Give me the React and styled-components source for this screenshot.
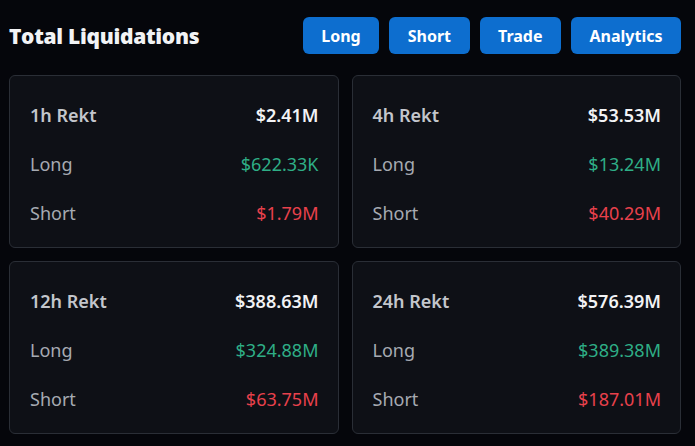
import styled, { createGlobalStyle } from "styled-components";

const GlobalStyle = createGlobalStyle`
  html, body {
    margin: 0;
    padding: 0;
    background: #05060b;
  }
  body {
    font-family: "Noto Sans", "Open Sans", sans-serif;
  }
`;

const data = [
  { title: "1h Rekt", total: "$2.41M", long: "$622.33K", short: "$1.79M" },
  { title: "4h Rekt", total: "$53.53M", long: "$13.24M", short: "$40.29M" },
  { title: "12h Rekt", total: "$388.63M", long: "$324.88M", short: "$63.75M" },
  { title: "24h Rekt", total: "$576.39M", long: "$389.38M", short: "$187.01M" },
];

const App = () => {
  return (
    <>
      <GlobalStyle />
      <Page>
        <Header>
          <Title>Total Liquidations</Title>
          <BtnRow>
            <NavBtn>Long</NavBtn>
            <NavBtn>Short</NavBtn>
            <NavBtn>Trade</NavBtn>
            <NavBtn>Analytics</NavBtn>
          </BtnRow>
        </Header>
        <Grid>
          {data.map((d) => (
            <Card key={d.title}>
              <Row>
                <Head>{d.title}</Head>
                <Value tone="total">{d.total}</Value>
              </Row>
              <Row>
                <Label>Long</Label>
                <Value tone="long">{d.long}</Value>
              </Row>
              <Row>
                <Label>Short</Label>
                <Value tone="short">{d.short}</Value>
              </Row>
            </Card>
          ))}
        </Grid>
      </Page>
    </>
  );
};

const Page = styled.div`
  width: 695px;
  height: 446px;
  padding: 17px 14px 0 9px;
  box-sizing: border-box;
  background: #05060b;
`;

const Header = styled.div`
  display: flex;
  align-items: center;
  justify-content: space-between;
  height: 37px;
`;

const Title = styled.h1`
  margin: 0;
  font-family: "Open Sans", sans-serif;
  font-size: 21px;
  font-weight: 800;
  color: #f2f3f5;
  letter-spacing: -0.3px;
`;

const BtnRow = styled.div`
  display: flex;
  gap: 10px;
`;

const NavBtn = styled.button`
  height: 37px;
  padding: 0 18.5px;
  border: none;
  border-radius: 6px;
  background-color: #0d6ecf;
  color: #ffffff;
  font-family: "Noto Sans", sans-serif;
  font-size: 16px;
  font-weight: 700;
`;

const Grid = styled.div`
  display: grid;
  grid-template-columns: 1fr 1fr;
  gap: 13px;
  margin-top: 21px;
`;

const Card = styled.div`
  height: 173px;
  box-sizing: border-box;
  border: 1px solid #2a2e36;
  border-radius: 6px;
  background-color: #0e1016;
  padding: 25px 19px 20px 20px;
  display: flex;
  flex-direction: column;
  justify-content: space-between;
`;

const Row = styled.div`
  display: flex;
  justify-content: space-between;
  align-items: center;
  height: 28px;
`;

const Head = styled.span`
  font-size: 18px;
  font-weight: 600;
  color: #c3c6cc;
`;

const Label = styled.span`
  font-size: 18px;
  font-weight: 400;
  color: #a6aab2;
`;

const colors = {
  total: "#f2f3f5",
  long: "#2eae86",
  short: "#e8414c",
};

const Value = styled.span`
  font-size: 18px;
  font-weight: ${(p) => (p.tone === "total" ? 600 : 400)};
  color: ${(p) => colors[p.tone]};
`;

export default App;
